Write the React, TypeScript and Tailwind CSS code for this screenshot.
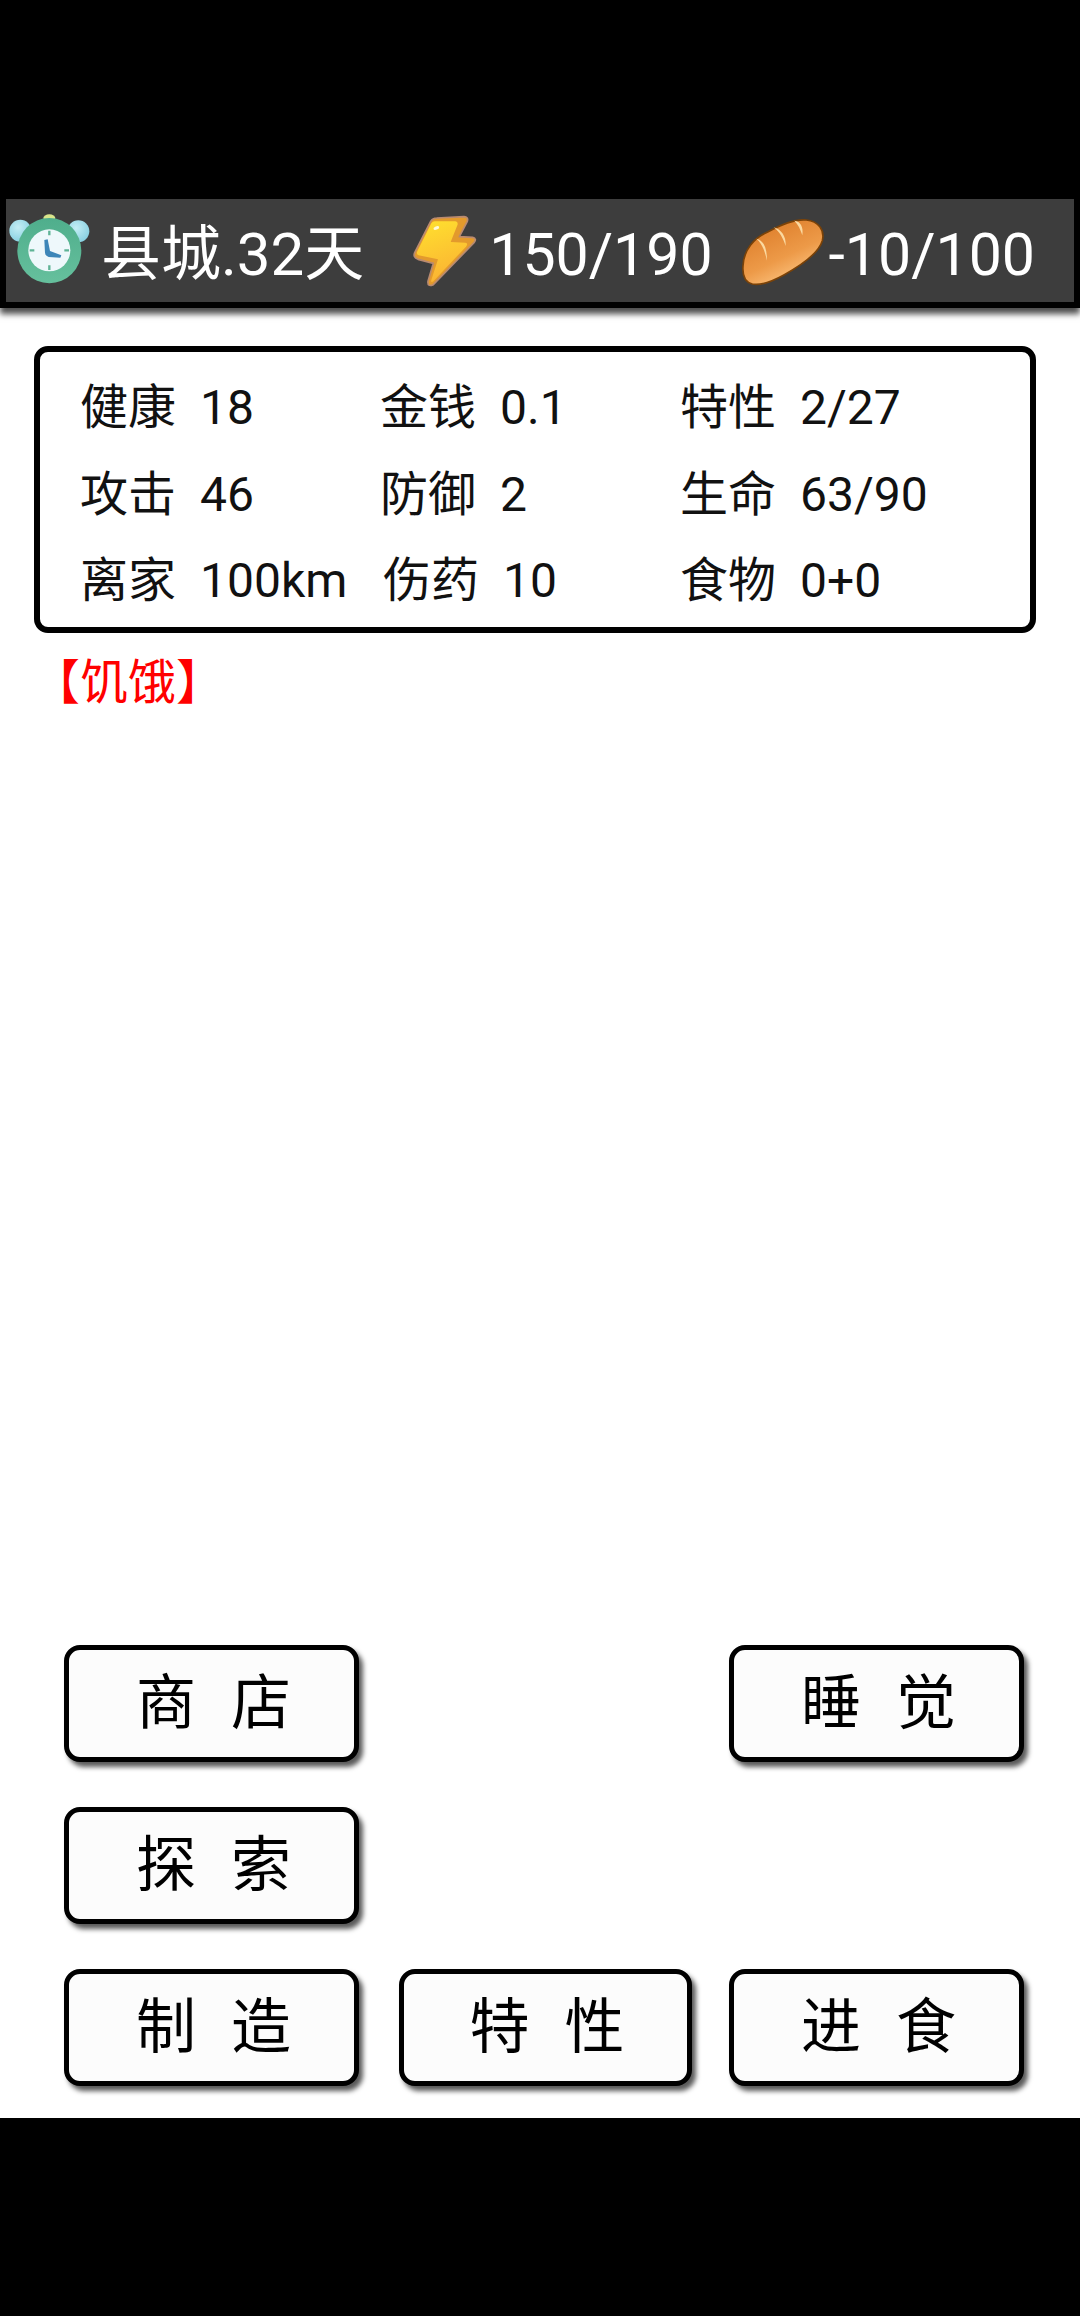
const stats = [
  { label: '健康', value: '18' },
  { label: '金钱', value: '0.1' },
  { label: '特性', value: '2/27' },
  { label: '攻击', value: '46' },
  { label: '防御', value: '2' },
  { label: '生命', value: '63/90' },
  { label: '离家', value: '100km' },
  { label: '伤药', value: '10', nudge: true },
  { label: '食物', value: '0+0' },
];

function ClockIcon() {
  return (
    <svg width="110" height="90" viewBox="0 0 330 270" className="shrink-0 ml-[-6px]">
      <defs>
        <radialGradient id="ear" cx="40%" cy="35%" r="70%">
          <stop offset="0%" stopColor="#c4eef5" />
          <stop offset="100%" stopColor="#86cfe0" />
        </radialGradient>
        <linearGradient id="body" x1="0" y1="0" x2="0" y2="1">
          <stop offset="0%" stopColor="#4fae8c" />
          <stop offset="100%" stopColor="#66c09d" />
        </linearGradient>
      </defs>
      <ellipse cx="148" cy="36" rx="18" ry="11" fill="#d9e58c" />
      <circle cx="61" cy="74" r="33" fill="url(#ear)" />
      <circle cx="235" cy="76" r="33" fill="url(#ear)" />
      <ellipse cx="148" cy="134" rx="96" ry="98" fill="url(#body)" />
      <circle cx="148" cy="133" r="63" fill="#eef8fb" />
      <path d="M148 74v14M148 178v14M89 133h14M193 133h14" stroke="#5fb396" strokeWidth="7" />
      <path d="M133 102 L143 100 L150 135 L184 148 L181 155 L146 153 Q136 150 135 140 Z" fill="#3d86b8" />
    </svg>
  );
}

function BoltIcon() {
  return (
    <svg width="100" height="90" viewBox="0 0 300 270" className="shrink-0 ml-[36px]">
      <defs>
        <linearGradient id="boltFront" x1="0" y1="0" x2="0.3" y2="1">
          <stop offset="0%" stopColor="#ffe12e" />
          <stop offset="100%" stopColor="#fbb533" />
        </linearGradient>
      </defs>
      <path
        d="M110 36 L192 32 Q206 33 202 46 L178 92 L218 94 Q232 98 222 110 L100 236 Q82 244 84 226 L100 172 L54 160 Q38 154 44 140 L92 46 Q98 36 110 36 Z"
        fill="#e39a2c"
        stroke="#b98a70"
        strokeWidth="5"
        strokeLinejoin="round"
      />
      <path
        d="M104 46 L166 46 Q176 48 172 58 L152 108 L196 110 Q206 112 198 122 L100 226 Q92 232 94 222 L114 160 L56 148 Q48 146 52 136 L94 52 Q98 46 104 46 Z"
        fill="url(#boltFront)"
      />
      <ellipse cx="109" cy="66" rx="9" ry="5" fill="#fff9d8" transform="rotate(-20 109 66)" />
    </svg>
  );
}

function BreadIcon() {
  return (
    <svg width="110" height="90" viewBox="0 0 330 270" className="shrink-0 ml-[18px]">
      <defs>
        <linearGradient id="loaf" x1="0.25" y1="0.1" x2="0.75" y2="0.95">
          <stop offset="0%" stopColor="#de7f2c" />
          <stop offset="55%" stopColor="#ed9a48" />
          <stop offset="100%" stopColor="#ffc987" />
        </linearGradient>
      </defs>
      <path
        d="M36 180 C38 130 70 96 110 78 C150 56 190 38 226 42 C262 46 282 72 274 104 C264 138 214 176 160 206 C124 226 92 240 64 234 C42 228 34 206 36 180 Z"
        fill="url(#loaf)"
        stroke="#7a4208"
        strokeWidth="5"
      />
      <path d="M76 98 C96 102 108 122 108 164 C100 130 92 112 76 98 Z" fill="#fbd9a0" />
      <path d="M128 64 C150 70 166 90 164 120 C156 96 146 78 128 64 Z" fill="#fbd9a0" />
      <path d="M190 44 C208 46 218 62 214 88 C208 70 202 56 190 44 Z" fill="#fbd9a0" />
    </svg>
  );
}

function GameButton({ text, className }: { text: string; className?: string }) {
  return (
    <button
      className={`h-[117px] rounded-[16px] border-[5px] border-black bg-[#fcfcfc] pl-[4px] text-[60px] text-black [word-spacing:20px] shadow-[4px_5px_5px_rgba(0,0,0,0.65)] ${className ?? ''}`}
    >
      {text}
    </button>
  );
}

export default function App() {
  return (
    <div className="w-[1080px] h-[2316px] flex flex-col bg-white overflow-hidden font-['Roboto','Noto_Sans_CJK_SC',sans-serif]">
      <div className="h-[199px] shrink-0 bg-black" />

      <div className="shrink-0 bg-black px-[6px] pb-[6px] shadow-[0_6px_6px_rgba(0,0,0,0.7)]">
        <div className="h-[103px] flex items-center bg-[#3d3d3d] text-[59px] leading-none text-white whitespace-nowrap">
          <ClockIcon />
          <span className="ml-[-9px] pt-[8px] text-[60px]">县城.32天</span>
          <BoltIcon />
          <span className="ml-[-11px] pt-[8px]">150/190</span>
          <BreadIcon />
          <span className="ml-[-12px] pt-[8px]">-10/100</span>
        </div>
      </div>

      <div className="mt-[38px] ml-[34px] mr-[44px] h-[287px] shrink-0 grid grid-cols-[300px_300px_1fr] grid-rows-[repeat(3,86.5px)] content-start items-center rounded-[14px] border-[6px] border-black pl-[40px] pt-[13px] text-[48px] leading-none text-[#111111]">
        {stats.map((s) => (
          <div key={s.label} className={`flex whitespace-nowrap ${s.nudge ? 'ml-[3px]' : ''}`}>
            <span>{s.label}</span>
            <span className="ml-[24px]">{s.value}</span>
          </div>
        ))}
      </div>

      <div className="mt-[20px] ml-[32px] text-[48px] leading-[60px] text-[#ff0000]">【饥饿】</div>

      <div className="flex-1" />

      <div className="shrink-0 grid grid-cols-[295px_295px_295px] justify-between gap-y-[45px] pl-[64px] pr-[56px] pb-[32px]">
        <GameButton text="商 店" />
        <GameButton text="睡 觉" className="col-start-3" />
        <GameButton text="探 索" className="col-start-1" />
        <GameButton text="制 造" className="col-start-1" />
        <GameButton text="特 性" className="ml-[2px]" />
        <GameButton text="进 食" />
      </div>

      <div className="h-[198px] shrink-0 bg-black" />
    </div>
  );
}
